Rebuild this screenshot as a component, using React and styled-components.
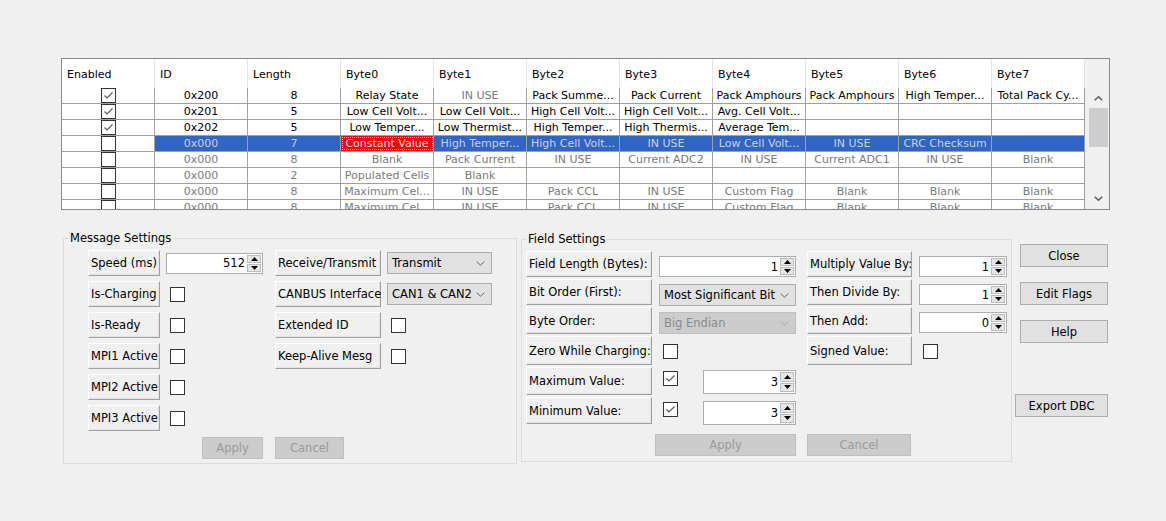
import React from "react";
import styled, { createGlobalStyle } from "styled-components";

const GlobalStyle = createGlobalStyle`
  html, body {
    margin: 0;
    background: #f0f0f0;
  }
  body {
    font-family: "DejaVu Sans", Tahoma, "Liberation Sans", sans-serif;
    font-size: 11px;
    color: #000;
  }
`;

const Page = styled.div`
  width: 1166px;
  height: 521px;
  box-sizing: border-box;
  padding: 58px 0 0 61px;
  overflow: hidden;
`;

/* ---------- message grid ---------- */

const GridFrame = styled.div`
  width: 1049px;
  height: 152px;
  box-sizing: border-box;
  border: 1px solid #828790;
  background: #f0f0f0;
  display: flex;
  flex-direction: column;
  overflow: hidden;
`;

const HeaderRow = styled.div`
  display: flex;
  height: 29px;
  flex-shrink: 0;
`;

const HeaderCell = styled.div`
  width: 93px;
  flex-shrink: 0;
  box-sizing: border-box;
  padding: 1px 0 0 5px;
  background: #fff;
  border-right: 1px solid #e5e5e5;
  display: flex;
  align-items: center;
`;

const GridBody = styled.div`
  flex: 1;
  display: flex;
  min-height: 0;
`;

const RowsArea = styled.div`
  width: 1023px;
  flex-shrink: 0;
  overflow: hidden;
  background: #fff;
`;

const Row = styled.div`
  display: flex;
  height: 16px;
  box-sizing: border-box;
  border-bottom: 1px solid #a0a0a0;
`;

const Cell = styled.div`
  width: 93px;
  flex-shrink: 0;
  box-sizing: border-box;
  border-right: 1px solid #a0a0a0;
  line-height: 15px;
  text-align: center;
  white-space: nowrap;
  overflow: hidden;
  color: ${({ $tone }) => $tone};
  background: ${({ $fill }) => $fill};
  outline: ${({ $focus }) => ($focus ? "1px dotted #9ff" : "none")};
  outline-offset: -2px;
`;

const CheckCell = styled(Cell)`
  display: flex;
  justify-content: center;
  background: #fff;
`;

const ScrollBar = styled.div`
  flex: 1;
  margin-left: 2px;
  display: flex;
  flex-direction: column;
  align-items: center;
`;

const ScrollArrow = styled.div`
  height: ${({ $h }) => $h}px;
  width: 100%;
  display: flex;
  align-items: center;
  justify-content: center;
`;

const ScrollThumb = styled.div`
  width: 19px;
  height: 39px;
  background: #cdcdcd;
`;

const ScrollTrack = styled.div`
  flex: 1;
`;

/* ---------- form controls ---------- */

const LabelButton = styled.div`
  box-sizing: border-box;
  display: flex;
  align-items: center;
  padding-left: 2px;
  background: #f0f0f0;
  border-style: solid;
  border-width: 1px;
  border-color: #fff #a0a0a0 #a0a0a0 #fff;
  box-shadow: inset -1px -1px 0 #e3e3e3;
  white-space: nowrap;
`;

const CheckBox = styled.span`
  display: inline-flex;
  align-items: center;
  justify-content: center;
  width: 15px;
  height: 15px;
  box-sizing: border-box;
  border: 1px solid #333;
  background: #fff;
  flex-shrink: 0;
`;

const FormCheck = styled(CheckBox)`
  justify-self: start;
  align-self: ${({ $top }) => ($top != null ? "start" : "center")};
  margin-top: ${({ $top }) => $top || 0}px;
  margin-left: ${({ $left }) => ($left != null ? $left : 4)}px;
`;

const SpinBox = styled.div`
  display: flex;
  width: ${({ $w }) => $w}px;
  height: ${({ $h }) => $h}px;
  box-sizing: border-box;
  border: 1px solid #adadad;
  background: #fff;
  align-self: ${({ $top }) => ($top != null ? "start" : "center")};
  margin-top: ${({ $top }) => $top || 0}px;
`;

const SpinValue = styled.span`
  flex: 1;
  display: flex;
  align-items: center;
  justify-content: flex-end;
  padding-right: 2px;
`;

const SpinButtons = styled.div`
  width: 15px;
  display: flex;
  flex-direction: column;
  gap: 1px;
  padding: 1px 1px 1px 0;
  box-sizing: border-box;
`;

const SpinButton = styled.div`
  flex: 1;
  display: flex;
  align-items: center;
  justify-content: center;
  background: #e6e6e6;
  border: 1px solid #bcbcbc;
`;

const ComboBox = styled.div`
  display: flex;
  align-items: center;
  justify-content: space-between;
  width: ${({ $w }) => $w}px;
  height: 22px;
  box-sizing: border-box;
  padding: 0 6px 0 4px;
  border: 1px solid ${({ $disabled }) => ($disabled ? "#bfbfbf" : "#adadad")};
  background: ${({ $disabled }) => ($disabled ? "#cccccc" : "#e1e1e1")};
  color: ${({ $disabled }) => ($disabled ? "#8a8a8a" : "#000")};
  align-self: ${({ $top }) => ($top != null ? "start" : "center")};
  margin-top: ${({ $top }) => $top || 0}px;
  white-space: nowrap;
`;

const PushButton = styled.div`
  width: ${({ $w }) => $w}px;
  height: ${({ $h }) => $h || 23}px;
  box-sizing: border-box;
  display: flex;
  align-items: center;
  justify-content: center;
  border: 1px solid ${({ $disabled }) => ($disabled ? "#bfbfbf" : "#adadad")};
  background: ${({ $disabled }) => ($disabled ? "#cccccc" : "#e1e1e1")};
  color: ${({ $disabled }) => ($disabled ? "#9a9a9a" : "#000")};
  margin-bottom: ${({ $after }) => $after || 0}px;
`;

/* ---------- group boxes ---------- */

const Bottom = styled.div`
  display: flex;
  align-items: flex-start;
  margin: 22px 0 0 2px;
  font-size: 11.5px;
`;

const Group = styled.fieldset`
  width: ${({ $width }) => $width}px;
  box-sizing: border-box;
  margin: ${({ $top }) => $top || 0}px ${({ $gap }) => $gap}px 0 0;
  padding: 0;
  border: 1px solid #dcdcdc;
  min-inline-size: 0;
`;

const Legend = styled.legend`
  margin-left: 4px;
  padding: 0 2px;
  line-height: 13px;
`;

const GroupBody = styled.div`
  padding: ${({ $pad }) => $pad};
`;

const Columns = styled.div`
  display: flex;
  gap: ${({ $gap }) => $gap}px;
`;

const FormGrid = styled.div`
  display: grid;
  grid-template-columns: ${({ $cols }) => $cols};
  grid-template-rows: ${({ $rows }) => $rows};
  row-gap: ${({ $rowGap }) => $rowGap || 0}px;
  column-gap: ${({ $colGap }) => $colGap}px;

  ${LabelButton} {
    margin-bottom: ${({ $trim }) => $trim || 0}px;
  }
`;

const ValueGroup = styled.div`
  display: flex;
  align-items: flex-start;
  justify-content: space-between;
  align-self: start;
  margin-top: ${({ $top }) => $top}px;
  padding-left: 4px;

  ${CheckBox} {
    margin-top: 1px;
  }
`;

const Footer = styled.div`
  display: flex;
  gap: ${({ $gap }) => $gap}px;
  margin-top: ${({ $top }) => $top}px;
`;

const FooterHalf = styled.div`
  width: ${({ $w }) => $w}px;
  display: flex;
  justify-content: ${({ $end }) => ($end ? "flex-end" : "flex-start")};
`;

const SideColumn = styled.div`
  width: 93px;
  display: flex;
  flex-direction: column;
  align-items: flex-end;
  padding-top: 12px;
`;

/* ---------- small drawings ---------- */

const Tick = () => (
  <svg width="13" height="13" viewBox="0 0 13 13">
    <polyline points="2.5,6.5 5,9 10.5,3.5" fill="none" stroke="#555" strokeWidth="1.1" />
  </svg>
);

const Chevron = ({ up, w = 9, h = 5, color = "#5a5a5a", stroke = 1.5 }) => (
  <svg width={w} height={h} viewBox={`0 0 ${w} ${h}`}>
    <polyline
      points={up ? `0.7,${h - 0.7} ${w / 2},0.8 ${w - 0.7},${h - 0.7}` : `0.7,0.7 ${w / 2},${h - 0.8} ${w - 0.7},0.7`}
      fill="none"
      stroke={color}
      strokeWidth={stroke}
    />
  </svg>
);

const Triangle = ({ up }) => (
  <svg width="7" height="4" viewBox="0 0 7 4">
    <polygon points={up ? "0,4 3.5,0 7,4" : "0,0 7,0 3.5,4"} fill="#000" />
  </svg>
);

const Check = ({ checked, ...rest }) => (
  <FormCheck {...rest}>{checked && <Tick />}</FormCheck>
);

const Spin = ({ value, w, h = 21, top }) => (
  <SpinBox $w={w} $h={h} $top={top}>
    <SpinValue>{value}</SpinValue>
    <SpinButtons>
      <SpinButton>
        <Triangle up />
      </SpinButton>
      <SpinButton>
        <Triangle />
      </SpinButton>
    </SpinButtons>
  </SpinBox>
);

const Combo = ({ value, w, top, disabled }) => (
  <ComboBox $w={w} $top={top} $disabled={disabled}>
    <span>{value}</span>
    <Chevron w={9} h={5} stroke={1} color={disabled ? "#a8a8a8" : "#666"} />
  </ComboBox>
);

/* ---------- data ---------- */

const columns = ["Enabled", "ID", "Length", "Byte0", "Byte1", "Byte2", "Byte3", "Byte4", "Byte5", "Byte6", "Byte7"];

const rows = [
  { on: true, id: "0x200", len: "8", bytes: ["Relay State", "IN USE", "Pack Summe...", "Pack Current", "Pack Amphours", "Pack Amphours", "High Temper...", "Total Pack Cy..."] },
  { on: true, id: "0x201", len: "5", bytes: ["Low Cell Volt...", "Low Cell Volt...", "High Cell Volt...", "High Cell Volt...", "Avg. Cell Volt...", "", "", ""] },
  { on: true, id: "0x202", len: "5", bytes: ["Low Temper...", "Low Thermist...", "High Temper...", "High Thermis...", "Average Tem...", "", "", ""] },
  { selected: true, dim: true, id: "0x000", len: "7", bytes: ["Constant Value", "High Temper...", "High Cell Volt...", "IN USE", "Low Cell Volt...", "IN USE", "CRC Checksum", ""] },
  { dim: true, id: "0x000", len: "8", bytes: ["Blank", "Pack Current", "IN USE", "Current ADC2", "IN USE", "Current ADC1", "IN USE", "Blank"] },
  { dim: true, id: "0x000", len: "2", bytes: ["Populated Cells", "Blank", "", "", "", "", "", ""] },
  { dim: true, id: "0x000", len: "8", bytes: ["Maximum Cel...", "IN USE", "Pack CCL", "IN USE", "Custom Flag", "Blank", "Blank", "Blank"] },
  { dim: true, id: "0x000", len: "8", bytes: ["Maximum Cel...", "IN USE", "Pack CCL", "IN USE", "Custom Flag", "Blank", "Blank", "Blank"] },
];

const toneFor = (row, text) => {
  if (row.selected) return "#c9d0e0";
  if (row.dim || text === "IN USE") return "#7b7b7b";
  return "#000";
};

const MessageTable = () => (
  <GridFrame>
    <HeaderRow>
      {columns.map((c) => (
        <HeaderCell key={c}>{c}</HeaderCell>
      ))}
    </HeaderRow>
    <GridBody>
      <RowsArea>
        {rows.map((row, i) => (
          <Row key={i}>
            <CheckCell>
              <CheckBox>{row.on && <Tick />}</CheckBox>
            </CheckCell>
            {[row.id, row.len, ...row.bytes].map((text, j) => {
              const focus = row.selected && j === 2;
              return (
                <Cell
                  key={j}
                  $tone={focus ? "#f6dede" : toneFor(row, text)}
                  $fill={focus ? "#ff0000" : row.selected ? "#3165c3" : "#fff"}
                  $focus={focus}
                >
                  {text}
                </Cell>
              );
            })}
          </Row>
        ))}
      </RowsArea>
      <ScrollBar>
        <ScrollArrow $h={20}>
          <Chevron up />
        </ScrollArrow>
        <ScrollThumb />
        <ScrollTrack />
        <ScrollArrow $h={21}>
          <Chevron />
        </ScrollArrow>
      </ScrollBar>
    </GridBody>
  </GridFrame>
);

const MessageSettings = () => (
  <Group $width={454} $gap={4}>
    <Legend>Message Settings</Legend>
    <GroupBody $pad="5px 0 4px 24px">
      <Columns $gap={12}>
        <FormGrid $cols="72px 97px" $rows="repeat(6, 26px)" $rowGap={5} $colGap={6}>
          <LabelButton>Speed (ms)</LabelButton>
          <Spin value="512" w={97} />
          <LabelButton>Is-Charging</LabelButton>
          <Check />
          <LabelButton>Is-Ready</LabelButton>
          <Check />
          <LabelButton>MPI1 Active</LabelButton>
          <Check />
          <LabelButton>MPI2 Active</LabelButton>
          <Check />
          <LabelButton>MPI3 Active</LabelButton>
          <Check />
        </FormGrid>
        <FormGrid $cols="106px 105px" $rows="repeat(4, 26px)" $rowGap={5} $colGap={6}>
          <LabelButton>Receive/Transmit</LabelButton>
          <Combo value="Transmit" w={105} />
          <LabelButton>CANBUS Interface</LabelButton>
          <Combo value="CAN1 & CAN2" w={105} />
          <LabelButton>Extended ID</LabelButton>
          <Check />
          <LabelButton>Keep-Alive Mesg</LabelButton>
          <Check />
        </FormGrid>
      </Columns>
      <Footer $gap={12} $top={6}>
        <FooterHalf $w={175} $end>
          <PushButton $w={61} $h={22} $disabled>
            Apply
          </PushButton>
        </FooterHalf>
        <FooterHalf $w={211}>
          <PushButton $w={69} $h={22} $disabled>
            Cancel
          </PushButton>
        </FooterHalf>
      </Footer>
    </GroupBody>
  </Group>
);

const fieldRows = "28px 28px 29px 31px 30px 29px";

const FieldSettings = () => (
  <Group $width={491} $gap={3} $top={1}>
    <Legend>Field Settings</Legend>
    <GroupBody $pad="5px 3px 5px 4px">
      <Columns $gap={11}>
        <FormGrid $cols="126px 137px" $rows={fieldRows} $colGap={7} $trim={2}>
          <LabelButton>Field Length (Bytes):</LabelButton>
          <Spin value="1" w={137} top={5} />
          <LabelButton>Bit Order (First):</LabelButton>
          <Combo value="Most Significant Bit" w={137} top={5} />
          <LabelButton>Byte Order:</LabelButton>
          <Combo value="Big Endian" w={137} top={5} disabled />
          <LabelButton>Zero While Charging:</LabelButton>
          <Check />
          <LabelButton>Maximum Value:</LabelButton>
          <ValueGroup $top={3}>
            <CheckBox>
              <Tick />
            </CheckBox>
            <Spin value="3" w={93} h={24} />
          </ValueGroup>
          <LabelButton>Minimum Value:</LabelButton>
          <ValueGroup $top={4}>
            <CheckBox>
              <Tick />
            </CheckBox>
            <Spin value="3" w={93} h={24} />
          </ValueGroup>
        </FormGrid>
        <FormGrid $cols="105px 88px" $rows={fieldRows} $colGap={7} $trim={2}>
          <LabelButton>Multiply Value By:</LabelButton>
          <Spin value="1" w={88} top={5} />
          <LabelButton>Then Divide By:</LabelButton>
          <Spin value="1" w={88} top={5} />
          <LabelButton>Then Add:</LabelButton>
          <Spin value="0" w={88} top={5} />
          <LabelButton>Signed Value:</LabelButton>
          <Check />
        </FormGrid>
      </Columns>
      <Footer $gap={11} $top={8}>
        <FooterHalf $w={270} $end>
          <PushButton $w={141} $h={22} $disabled>
            Apply
          </PushButton>
        </FooterHalf>
        <FooterHalf $w={200}>
          <PushButton $w={104} $h={22} $disabled>
            Cancel
          </PushButton>
        </FooterHalf>
      </Footer>
    </GroupBody>
  </Group>
);

const DialogButtons = () => (
  <SideColumn>
    <PushButton $w={88} $after={15}>
      Close
    </PushButton>
    <PushButton $w={88} $after={15}>
      Edit Flags
    </PushButton>
    <PushButton $w={88} $after={51}>
      Help
    </PushButton>
    <PushButton $w={93}>Export DBC</PushButton>
  </SideColumn>
);

export default function App() {
  return (
    <Page>
      <GlobalStyle />
      <MessageTable />
      <Bottom>
        <MessageSettings />
        <FieldSettings />
        <DialogButtons />
      </Bottom>
    </Page>
  );
}
